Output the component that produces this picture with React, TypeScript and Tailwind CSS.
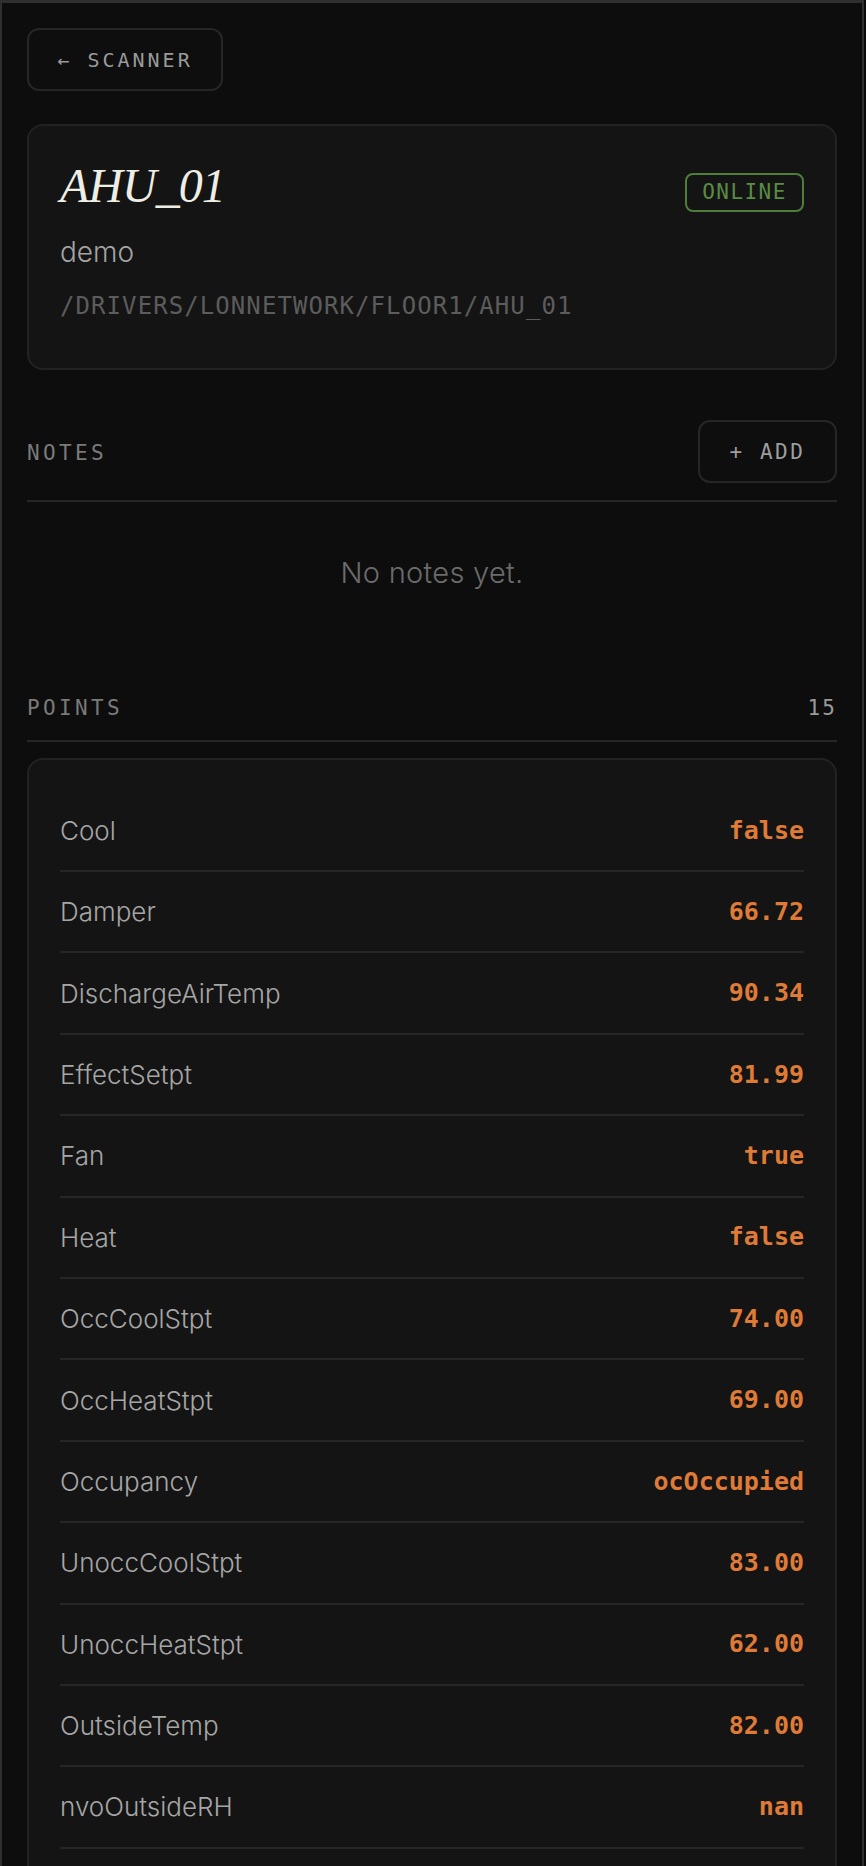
import React from 'react'

type Point = { name: string; value: string }

const points: Point[] = [
  { name: 'Cool', value: 'false' },
  { name: 'Damper', value: '66.72' },
  { name: 'DischargeAirTemp', value: '90.34' },
  { name: 'EffectSetpt', value: '81.99' },
  { name: 'Fan', value: 'true' },
  { name: 'Heat', value: 'false' },
  { name: 'OccCoolStpt', value: '74.00' },
  { name: 'OccHeatStpt', value: '69.00' },
  { name: 'Occupancy', value: 'ocOccupied' },
  { name: 'UnoccCoolStpt', value: '83.00' },
  { name: 'UnoccHeatStpt', value: '62.00' },
  { name: 'OutsideTemp', value: '82.00' },
  { name: 'nvoOutsideRH', value: 'nan' },
  { name: 'ReturnAirTemp', value: '71.20' },
  { name: 'SpaceTemp', value: '72.50' },
]

const mono = "font-['DejaVu_Sans_Mono','Liberation_Mono',monospace]"
const sans = "font-['Inter','Noto_Sans',sans-serif]"

export default function App() {
  return (
    <div className="min-h-screen w-full bg-[#0a0a0a]">
      <div className="min-h-screen w-[864px] border-x-2 border-t-[3px] border-[#2f2f2f] bg-[#0d0d0d] px-[25px] pt-[25px] pb-10">
        <button className={`${mono} flex h-[63px] w-[196px] items-center justify-center rounded-[12px] border-2 border-[#262626] bg-[#0e0e0e] text-[20px] tracking-[0.15em] text-[#9a9a9a]`}>
          ← SCANNER
        </button>

        <div className="mt-[33px] rounded-[16px] border-2 border-[#222] bg-[#141414] px-[31px] pt-[31px] pb-[44px]">
          <div className="flex items-start justify-between">
            <h1 className="font-['Liberation_Serif',serif] text-[48px] italic leading-[1.2] tracking-[-1px] text-[#efeee5]">AHU_01</h1>
            <span className={`${mono} mt-[16px] flex h-[39px] w-[119px] items-center justify-center rounded-[8px] border-2 border-[#4f7d3a] text-[21px] tracking-[0.07em] text-[#5a8c45]`}>
              ONLINE
            </span>
          </div>
          <div className={`${sans} mt-[20px] text-[28px] font-light leading-[34px] text-[#a3a3a3]`}>demo</div>
          <div className={`${mono} mt-[19px] text-[24px] leading-[36px] tracking-[0.045em] text-[#5c5c5c]`}>
            /DRIVERS/LONNETWORK/FLOOR1/AHU_01
          </div>
        </div>

        <section className="mt-[50px]">
          <div className="flex items-center justify-between border-b-2 border-[#262626] pb-[17px]">
            <span className={`${mono} mt-[5px] text-[21px] tracking-[0.16em] text-[#7a7a7a]`}>NOTES</span>
            <button className={`${mono} flex h-[63px] w-[139px] items-center justify-center rounded-[12px] border-2 border-[#262626] bg-[#0e0e0e] pt-[4px] text-[21px] tracking-[0.12em] text-[#9e9e9e]`}>
              + ADD
            </button>
          </div>
          <p className={`${sans} pt-[54px] pb-[56px] text-center text-[29px] font-light leading-[34px] tracking-[0.01em] text-[#6b6b6b]`}>
            No notes yet.
          </p>
        </section>

        <section className="mt-[50px]">
          <div className="flex items-center justify-between border-b-2 border-[#262626] pb-[20px]">
            <span className={`${mono} text-[21px] leading-[24px] tracking-[0.16em] text-[#7a7a7a]`}>POINTS</span>
            <span className={`${mono} text-[21px] leading-[24px] tracking-[0.1em] text-[#9a9a9a]`}>15</span>
          </div>
          <div className="mt-[16px] rounded-[16px] border-2 border-[#222] bg-[#141414] px-[31px] pt-[31px] pb-[20px]">
            {points.map((p) => (
              <div key={p.name} className="flex h-[81.4px] items-center justify-between border-b-2 border-[#262626]">
                <span className={`${sans} text-[26px] font-light text-[#a6a6a6]`}>{p.name}</span>
                <span className={`${mono} text-[25px] font-bold text-[#df7a37]`}>{p.value}</span>
              </div>
            ))}
          </div>
        </section>
      </div>
    </div>
  )
}
